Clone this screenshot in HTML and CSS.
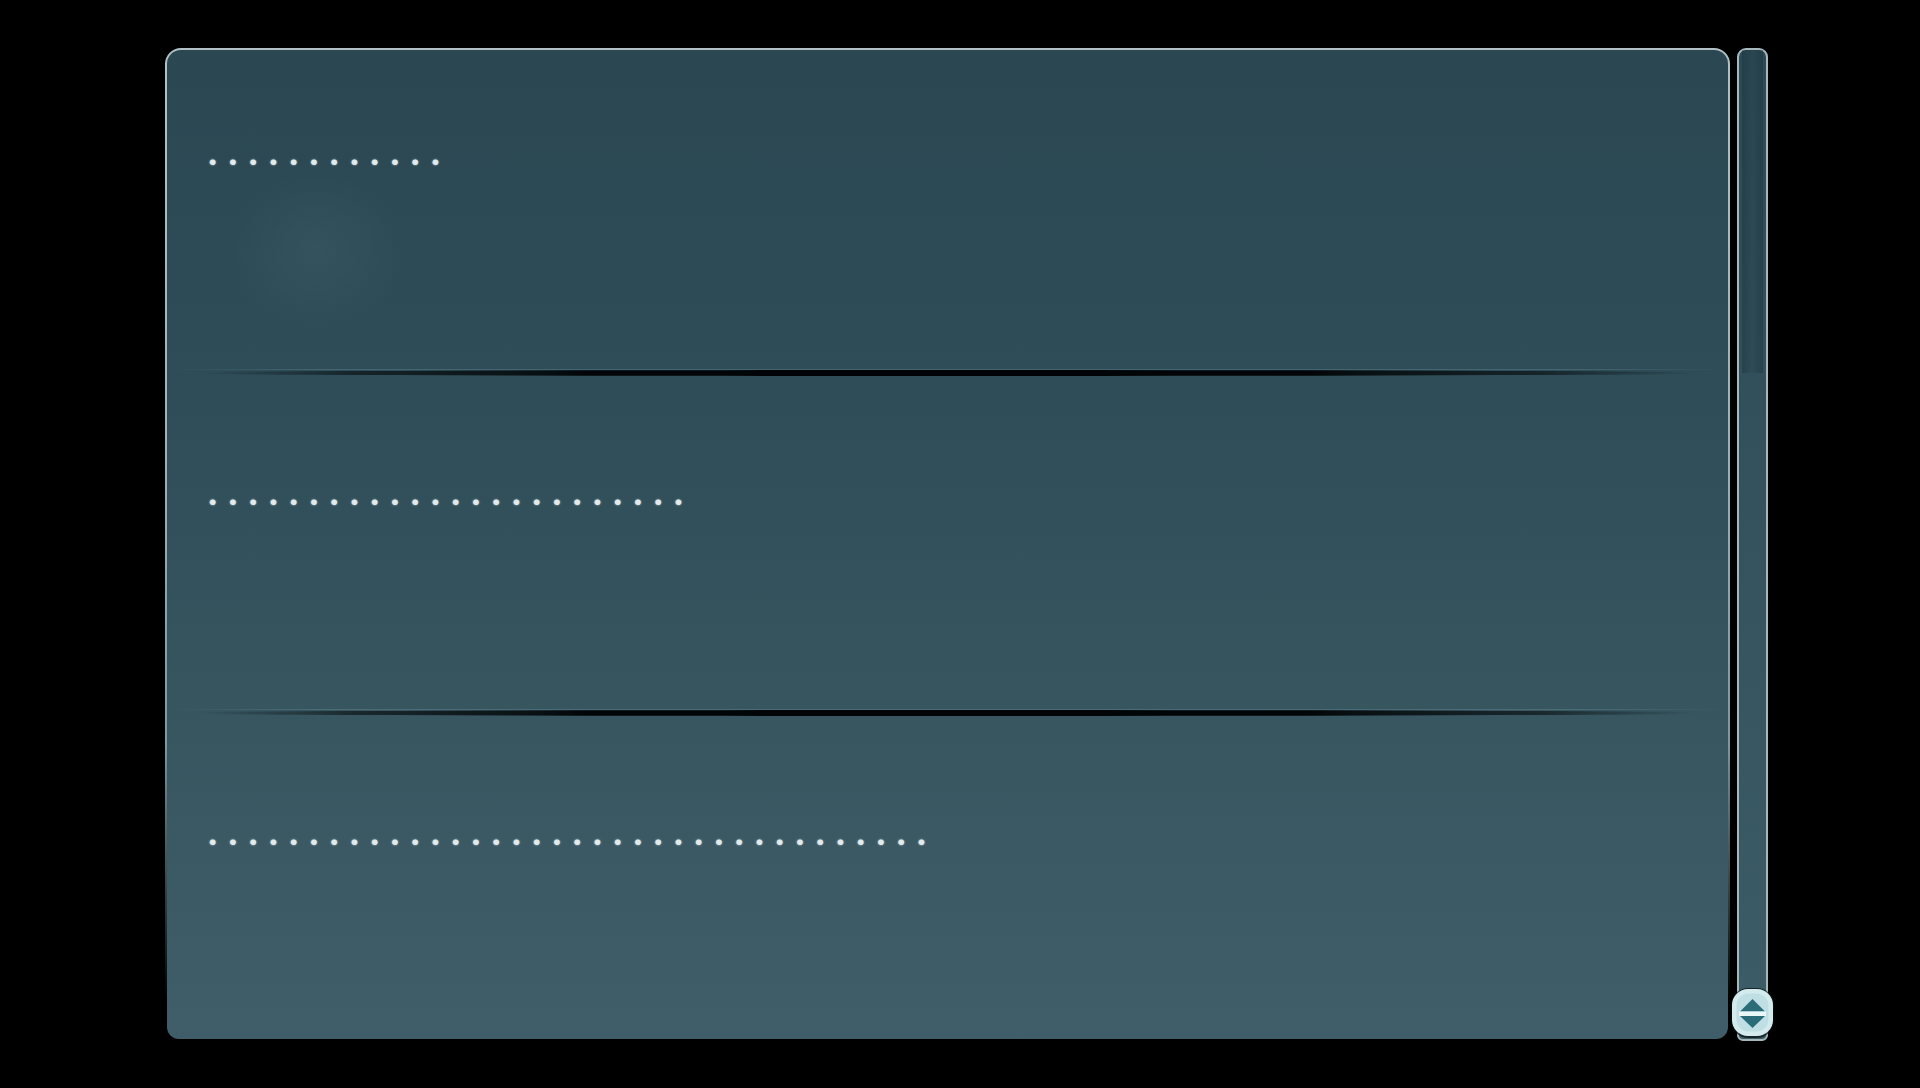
FILE: index.html
```html
<!DOCTYPE html>
<html lang="en">
<head>
<meta charset="utf-8">
<title>List</title>
<link rel="stylesheet" href="styles.css">
</head>
<body>
<div class="screen">
  <div class="panel">
    <div class="glow"></div>
    <ul class="list">
      <li class="row"><span class="secret">••••••••••••</span></li>
      <li class="row"><span class="secret">••••••••••••••••••••••••</span></li>
      <li class="row last"><span class="secret">••••••••••••••••••••••••••••••••••••</span></li>
    </ul>
  </div>
  <div class="scrollbar">
    <div class="thumb"></div>
    <div class="handle">
      <svg width="47" height="54" viewBox="0 0 47 54">
        <rect x="1.5" y="2" width="44" height="50" rx="18" fill="#050d10" opacity="0.7"/>
        <rect x="3" y="3" width="41" height="47" rx="16" fill="#d4ebee"/>
        <rect x="7.5" y="7.5" width="32" height="38" rx="12" fill="#bfdfe4"/>
        <polygon points="23.5,13 36,25.5 11,25.5" fill="#2b6c79"/>
        <polygon points="11,30 36,30 23.5,42" fill="#2b6c79"/>
        <rect x="10" y="25.5" width="27" height="4.5" fill="#eaf7f9"/>
      </svg>
    </div>
  </div>
</div>
</body>
</html>
```

FILE: styles.css
```css
html, body {
  margin: 0;
  padding: 0;
  background: #000;
}

body {
  width: 1920px;
  height: 1088px;
  overflow: hidden;
  font-family: "Liberation Sans", Arial, sans-serif;
}

.screen {
  display: flex;
  align-items: flex-start;
  gap: 7px;
  padding: 48px 0 0 165px;
}

.panel {
  position: relative;
  box-sizing: border-box;
  width: 1565px;
  height: 993px;
  border: 2px solid transparent;
  border-radius: 16px 16px 14px 14px;
  background:
    linear-gradient(180deg, #2a4752 0%, #2f4d58 35%, #37555f 65%, #3f5e69 100%) padding-box,
    linear-gradient(180deg, #b2c1c5 0%, #9fb1b6 40%, #7f979d 70%, rgba(60,90,100,0) 96%) border-box;
  overflow: hidden;
}

.glow {
  position: absolute;
  left: 60px;
  top: 120px;
  width: 180px;
  height: 160px;
  background: radial-gradient(ellipse at center, rgba(90,125,135,0.16) 0%, rgba(90,125,135,0) 70%);
  pointer-events: none;
}

.list {
  list-style: none;
  margin: -17px 0 0 0;
  padding: 0;
}

.row {
  position: relative;
  box-sizing: border-box;
  height: 340px;
  padding: 119px 0 0 42px;
}

.row::before {
  content: "";
  position: absolute;
  left: 0;
  right: 0;
  bottom: 3px;
  height: 1px;
  background: linear-gradient(90deg, rgba(110,150,160,0) 0%, rgba(110,150,160,0.35) 10%, rgba(110,150,160,0.35) 90%, rgba(110,150,160,0) 100%);
}

.row::after {
  content: "";
  position: absolute;
  left: 0;
  right: 0;
  bottom: -3px;
  height: 6px;
  border-radius: 50%;
  background: linear-gradient(90deg, rgba(5,10,12,0) 2%, rgba(5,10,12,0.6) 12%, rgba(3,8,10,0.9) 24%, #020507 27%, #020507 73%, rgba(3,8,10,0.9) 76%, rgba(5,10,12,0.6) 88%, rgba(5,10,12,0) 98%);
  z-index: 1;
}

.row.last::before,
.row.last::after {
  display: none;
}

.secret {
  display: block;
  font-size: 21px;
  line-height: 20px;
  letter-spacing: 12.9px;
  color: #e2eaec;
  text-shadow: 0 0 2px rgba(230, 240, 242, 0.8);
  white-space: nowrap;
}

.scrollbar {
  position: relative;
  box-sizing: border-box;
  width: 31px;
  height: 993px;
  border: 2px solid #a7b8bd;
  border-radius: 9px 9px 6px 6px;
  background: linear-gradient(180deg, #2c4a55 0%, #34535e 50%, #3c5c67 100%);
}

.thumb {
  height: 323px;
  margin: 0 3px;
  background: linear-gradient(90deg, rgba(20,40,48,0.35), rgba(20,40,48,0.1) 50%, rgba(20,40,48,0.35));
}

.handle {
  position: absolute;
  left: -10px;
  top: 936px;
  width: 47px;
  height: 54px;
}

.handle svg {
  display: block;
}
```
